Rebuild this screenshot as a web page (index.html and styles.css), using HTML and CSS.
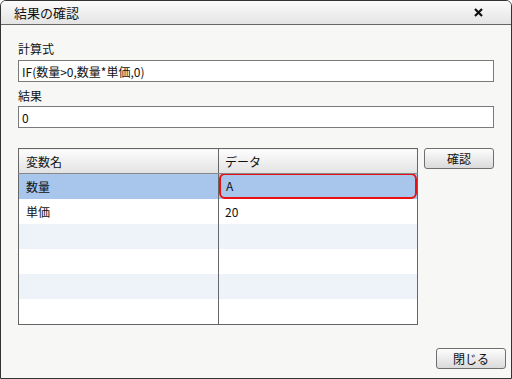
FILE: index.html
```html
<!DOCTYPE html>
<html lang="ja">
<head>
    <meta charset="UTF-8">
    <title>結果の確認</title>
    <link rel="stylesheet" href="styles.css">
</head>
<body>
    <div class="dialog">
        <div class="titlebar">
            <span class="title">結果の確認</span>
            <svg class="close-x" width="9" height="9" viewBox="0 0 9 9">
                <path d="M1 1 L8 8 M8 1 L1 8" stroke="#111" stroke-width="2.2"/>
            </svg>
        </div>
        <div class="content">
            <div class="label">計算式</div>
            <input type="text" class="field" value="IF(数量>0,数量*単価,0)" />
            <div class="label second">結果</div>
            <input type="text" class="field" value="0" />

            <div class="table-row">
                <table class="vars">
                    <thead>
                        <tr>
                            <th class="col-name">変数名</th>
                            <th>データ</th>
                        </tr>
                    </thead>
                    <tbody>
                        <tr class="selected">
                            <td>数量</td>
                            <td class="invalid"><div class="err">A</div></td>
                        </tr>
                        <tr>
                            <td>単価</td>
                            <td>20</td>
                        </tr>
                        <tr class="alt"><td></td><td></td></tr>
                        <tr><td></td><td></td></tr>
                        <tr class="alt"><td></td><td></td></tr>
                        <tr><td></td><td></td></tr>
                    </tbody>
                </table>
                <button class="btn">確認</button>
            </div>
        </div>
        <div class="footer">
            <button class="btn">閉じる</button>
        </div>
    </div>
</body>
</html>
```

FILE: styles.css
```css
body {
    margin: 0;
    font-family: "Noto Sans CJK JP", "Liberation Sans", sans-serif;
    font-size: 12px;
    color: #111;
    background-color: #fff;
}
.dialog {
    width: 510px;
    height: 377px;
    border: 1px solid #333;
    border-radius: 6px 6px 0 0;
    background-color: #f7f8f6;
    display: flex;
    flex-direction: column;
    overflow: hidden;
}
.titlebar {
    height: 23px;
    border-bottom: 1px solid #666;
    background: linear-gradient(#fbfbfb, #e3e4e3);
    display: flex;
    align-items: center;
    justify-content: space-between;
    padding: 0 28px 0 13px;
}
.title {
    font-size: 13px;
    line-height: 23px;
}
.close-x {
    display: block;
}
.content {
    padding: 15px 17px 0 17px;
    flex: 1;
}
.label {
    line-height: 18px;
    height: 18px;
    margin-bottom: 2px;
}
.label.second {
    margin-top: 5px;
    margin-bottom: 1px;
}
.field {
    display: block;
    box-sizing: border-box;
    width: 476px;
    height: 22px;
    margin: 0;
    padding: 0 3px;
    border: 1px solid #7a7a7a;
    background-color: #fff;
    font-family: inherit;
    font-size: 12px;
    color: #111;
}
.table-row {
    display: flex;
    align-items: flex-start;
    margin-top: 20px;
}
.vars {
    width: 401px;
    border-collapse: collapse;
    table-layout: fixed;
    border: 1px solid #666;
    background-color: #fff;
}
.vars th, .vars td {
    height: 25px;
    padding: 0 0 0 7px;
    text-align: left;
    font-weight: normal;
    box-sizing: border-box;
}
.vars th {
    background: linear-gradient(#fdfdfd, #e2e2e2);
    border-bottom: 1px solid #888;
}
.col-name {
    width: 200px;
}
.vars th + th, .vars td + td {
    border-left: 1px solid #666;
    padding-left: 6px;
}
.vars tr.selected td {
    background-color: #a8c6ec;
}
.vars tr.alt td {
    background-color: #eef3fa;
}
.vars td.invalid {
    padding: 0;
}
.err {
    box-sizing: border-box;
    height: 26px;
    margin-top: -1px;
    border: 2px solid #e81010;
    border-radius: 6px;
    padding-left: 5px;
    line-height: 22px;
}
.btn {
    box-sizing: border-box;
    width: 70px;
    height: 21px;
    padding: 0;
    margin-left: 6px;
    border: 1px solid #6f6f6f;
    border-radius: 3px;
    background: linear-gradient(#fdfdfd, #dadada);
    font-family: inherit;
    font-size: 12px;
    color: #111;
}
.footer {
    display: flex;
    justify-content: flex-end;
    padding: 0 5px 9px 0;
}
```
